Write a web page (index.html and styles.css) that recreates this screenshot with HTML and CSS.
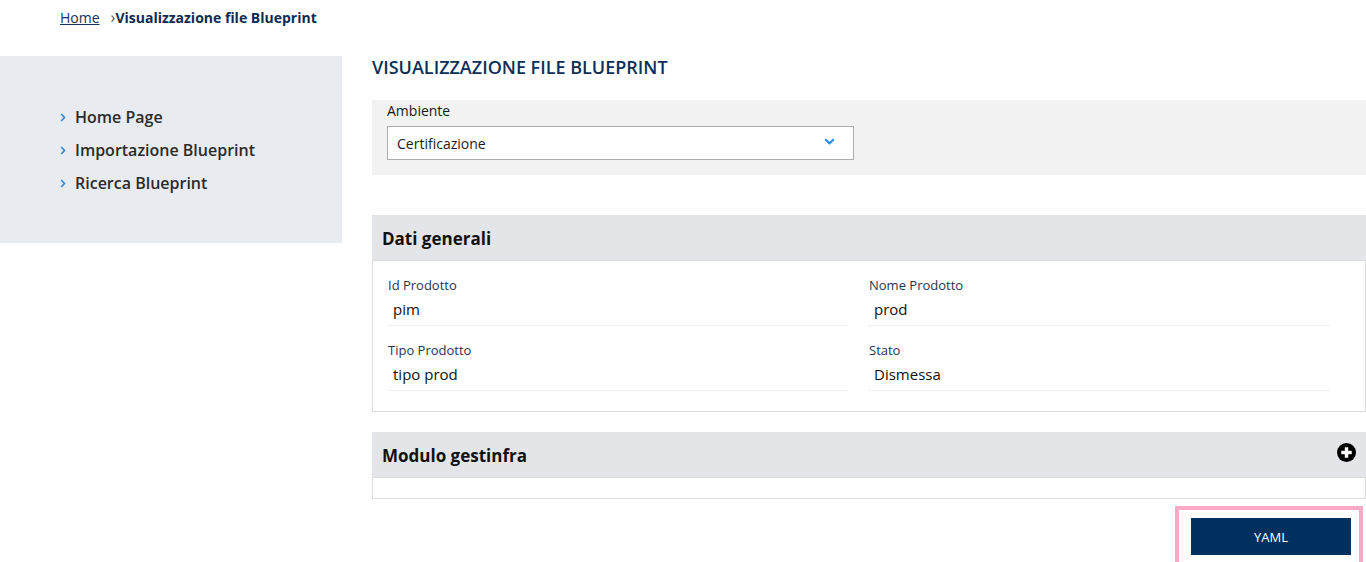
FILE: index.html
```html
<!DOCTYPE html>
<html lang="it">
<head>
<meta charset="utf-8">
<title>Visualizzazione file Blueprint</title>
<link rel="stylesheet" href="styles.css">
</head>
<body>
<nav class="breadcrumb">
  <a class="crumb-link" href="#">Home</a>
  <span class="crumb-sep">&#8250;</span>
  <span class="crumb-current">Visualizzazione file Blueprint</span>
</nav>
<div class="layout">
  <aside class="sidebar">
    <ul class="menu">
      <li class="menu-item"><svg class="menu-chev" width="6" height="9" viewBox="0 0 6 9"><polyline points="1.2,1 4.5,4.5 1.2,8" fill="none" stroke="#2f86d8" stroke-width="1.6"/></svg>Home Page</li>
      <li class="menu-item"><svg class="menu-chev" width="6" height="9" viewBox="0 0 6 9"><polyline points="1.2,1 4.5,4.5 1.2,8" fill="none" stroke="#2f86d8" stroke-width="1.6"/></svg>Importazione Blueprint</li>
      <li class="menu-item"><svg class="menu-chev" width="6" height="9" viewBox="0 0 6 9"><polyline points="1.2,1 4.5,4.5 1.2,8" fill="none" stroke="#2f86d8" stroke-width="1.6"/></svg>Ricerca Blueprint</li>
    </ul>
  </aside>
  <main class="main">
    <h1 class="page-title">VISUALIZZAZIONE FILE BLUEPRINT</h1>
    <div class="filter">
      <label class="filter-label">Ambiente</label>
      <div class="select">
        <span>Certificazione</span>
        <svg class="select-chev" width="11" height="7" viewBox="0 0 11 7"><polyline points="1.2,1.2 5.5,5.3 9.8,1.2" fill="none" stroke="#1a8cff" stroke-width="2"/></svg>
      </div>
    </div>
    <section class="panel panel-first">
      <div class="panel-head"><h2 class="panel-title">Dati generali</h2></div>
      <div class="panel-body fields">
        <div class="field"><div class="field-label">Id Prodotto</div><div class="field-value">pim</div></div>
        <div class="field"><div class="field-label">Nome Prodotto</div><div class="field-value">prod</div></div>
        <div class="field"><div class="field-label">Tipo Prodotto</div><div class="field-value">tipo prod</div></div>
        <div class="field"><div class="field-label">Stato</div><div class="field-value">Dismessa</div></div>
      </div>
    </section>
    <section class="panel panel-second">
      <div class="panel-head">
        <h2 class="panel-title">Modulo gestinfra</h2>
        <svg class="plus" width="19" height="19" viewBox="0 0 20 20"><circle cx="10" cy="10" r="10" fill="#000"/><rect x="4.5" y="8.2" width="11" height="3.6" fill="#fff"/><rect x="8.2" y="4.5" width="3.6" height="11" fill="#fff"/></svg>
      </div>
      <div class="panel-body empty"></div>
    </section>
    <div class="actions">
      <div class="highlight"><button class="btn">YAML</button></div>
    </div>
  </main>
</div>
</body>
</html>
```
FILE: styles.css
```css
* { box-sizing: border-box; }
html, body { margin: 0; padding: 0; }
body {
  font-family: "Open Sans", "Liberation Sans", sans-serif;
  color: #1a1a1a;
  background: #fff;
  overflow: hidden;
}
.breadcrumb {
  height: 56px;
  padding: 8px 0 0 60px;
  font-size: 14px;
  line-height: 20px;
  display: flex;
  align-items: flex-start;
}
.crumb-link { color: #15325a; text-decoration: underline; }
.crumb-sep { color: #555; margin-left: 11px; font-size: 16px; line-height: 19px; }
.crumb-current { color: #0d2b52; font-weight: 700; font-size: 14px; }
.layout { display: flex; gap: 30px; align-items: flex-start; }
.sidebar {
  width: 342px;
  flex: none;
  background: #e8ebf0;
  padding: 49px 0 48px 60px;
}
.menu { list-style: none; margin: 0; padding: 0; display: flex; flex-direction: column; gap: 9px; }
.menu-item {
  font-size: 16px;
  line-height: 24px;
  font-weight: 600;
  color: #2b2b2b;
  display: flex;
  align-items: center;
}
.menu-chev { margin-right: 9px; margin-top: 1px; }
.main { flex: 1; min-width: 0; }
.page-title {
  margin: 0;
  font-size: 18px;
  line-height: 22px;
  font-weight: 600;
  color: #0d2f57;
}
.filter {
  margin-top: 22px;
  background: #f2f2f2;
  padding: 1px 15px 15px;
}
.filter-label { display: block; font-size: 14px; line-height: 20px; color: #1a1a1a; margin-bottom: 5px; }
.select {
  width: 467px;
  height: 34px;
  border: 1px solid #adadad;
  background: #fff;
  display: flex;
  align-items: center;
  justify-content: space-between;
  padding: 0 18px 0 9px;
  font-size: 14px;
  color: #1a1a1a;
}
.select-chev { margin-top: -3px; }
.panel-first { margin-top: 40px; }
.panel-second { margin-top: 20px; }
.panel-head {
  height: 45px;
  background: #e4e5e9;
  display: flex;
  align-items: center;
  justify-content: space-between;
  padding: 0 10px;
}
.panel-title { margin: 0; font-size: 17px; font-weight: 700; color: #111; padding-top: 1px; }
.plus { margin-top: -4px; }
.panel-body { border: 1px solid #dcdcdc; background: #fff; }
.fields {
  display: grid;
  grid-template-columns: 460px 460px;
  column-gap: 21px;
  row-gap: 15px;
  padding: 15px 37px 20px 15px;
}
.field { border-bottom: 1px dotted #e4e4e4; padding-bottom: 5px; }
.field-label { font-size: 13px; line-height: 18px; color: #1f3553; }
.field-value { font-size: 15px; line-height: 22px; color: #111; margin-top: 4px; padding-left: 5px; }
.empty { height: 22px; }
.actions { display: flex; justify-content: flex-end; margin-top: 7px; padding-right: 3px; }
.highlight { border: 4px solid #f9a8c6; padding: 8px 8px 8px 12px; }
.btn {
  display: block;
  width: 160px;
  height: 37px;
  border: 0;
  background: #00305e;
  color: #fff;
  font-family: "Open Sans", "Liberation Sans", sans-serif;
  font-size: 13px;
}
```
